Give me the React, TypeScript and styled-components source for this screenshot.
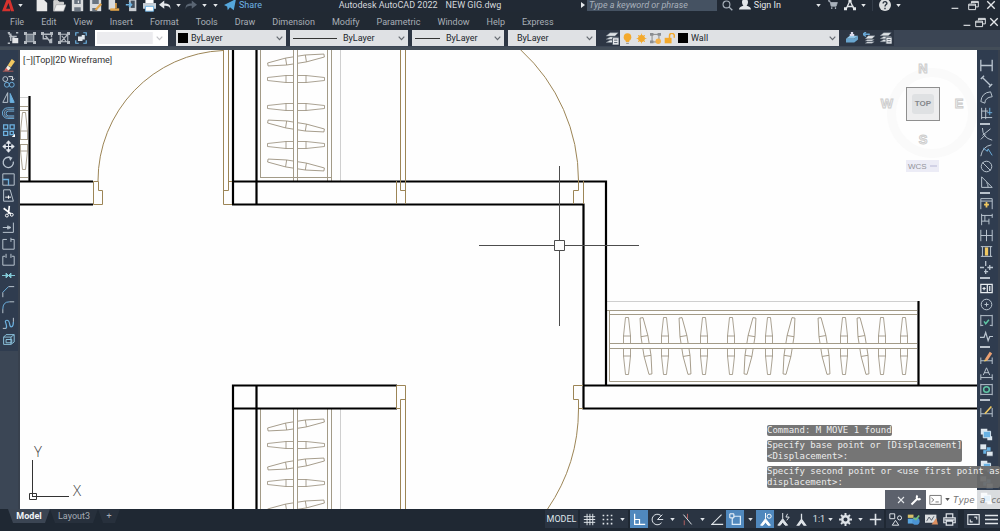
import React from "react";
import styled, { createGlobalStyle, css } from "styled-components";

const Global = createGlobalStyle`
  * { box-sizing: border-box; }
  body { margin: 0; font-family: Roboto, "Noto Sans", sans-serif; font-size: 9px; background: #1f2833; }
  button, input, select { font: inherit; color: inherit; border: 0; margin: 0; padding: 0; background: none; outline: none; }
`;

const Shell = styled.div`
  height: 100vh;
  display: flex;
  flex-direction: column;
  overflow: hidden;
  color: #d3d7dc;
`;

const TitleBar = styled.header`
  height: 12px;
  padding-bottom: 2px;
  flex: none;
  display: flex;
  align-items: center;
  background: #212934;
`;
const TitleGroup = styled.div<{ $w?: number; $end?: boolean }>`
  display: flex;
  align-items: center;
  flex: none;
  height: 10px;
  width: ${(p) => (p.$w ? p.$w + "px" : "auto")};
  justify-content: ${(p) => (p.$end ? "flex-end" : "flex-start")};
`;
const Title = styled.h1`
  flex: 1;
  margin: 0;
  display: flex;
  justify-content: center;
  gap: 8px;
  font-size: 9px;
  line-height: 10px;
  font-weight: 400;
  color: #d5d8dc;
  white-space: nowrap;
`;
const BarButton = styled.button<{ $w?: number; $tone?: string }>`
  flex: none;
  display: flex;
  align-items: center;
  justify-content: center;
  height: 16px;
  width: ${(p) => (p.$w ?? 18) + "px"};
  color: ${(p) => p.$tone ?? "#e4e7ea"};
  white-space: nowrap;
`;
const TextButton = styled(BarButton)`
  width: auto;
  height: 10px;
  gap: 3px;
  line-height: 10px;
`;
const Spacer = styled.span<{ $w: number }>`
  flex: none;
  width: ${(p) => p.$w + "px"};
`;
const Search = styled.input`
  width: 130px;
  height: 12px;
  padding: 0 2px;
  line-height: 10px;
  background: #455262;
  font-style: italic;
  &::placeholder { color: #a7b0ba; opacity: 1; }
`;
const Divider = styled.span`
  width: 1px;
  height: 12px;
  margin: 0 2px 0 4px;
  background: #333c48;
`;

const MenuRow = styled.nav`
  height: 18px;
  padding-top: 2px;
  flex: none;
  display: flex;
  align-items: center;
  justify-content: space-between;
  background: #212933;
`;
const Menu = styled.ul`
  list-style: none;
  margin: 0;
  padding: 0 0 0 10px;
  display: flex;
  gap: 17px;
`;
const MenuItem = styled.button`
  line-height: 12px;
  color: #a9afb7;
`;

const PropertyBar = styled.div`
  height: 20px;
  flex: none;
  display: flex;
  align-items: flex-start;
  background: #3b4554;
  border-bottom: 3px solid #434d58;
`;
const PropGroup = styled.div`
  display: flex;
  height: 16px;
  align-items: center;
  flex: none;
  background: #2d3644;
`;
const Grip = styled.span<{ $flat?: boolean }>`
  flex: none;
  background-image: radial-gradient(#7d8794 40%, transparent 45%);
  background-size: 2px 2px;
  ${(p) => (p.$flat
    ? css`width: 12px; height: 4px; margin: 1px 0;`
    : css`width: 4px; height: 12px;`)}
`;
const Combo = styled.label<{ $w: number; $blank?: boolean }>`
  width: ${(p) => p.$w + "px"};
  height: 16px;
  flex: none;
  margin-right: 4px;
  padding: 0 3px 0 2px;
  display: flex;
  align-items: center;
  gap: 3px;
  background: ${(p) => (p.$blank ? "linear-gradient(90deg,#ececef 80%,#fff 82%)" : "#dfe1e4")};
  border: ${(p) => (p.$blank ? "2px solid #fff" : "0")};
  color: #22262c;
`;
const Select = styled.select`
  appearance: none;
  flex: 1;
  min-width: 0;
  height: 16px;
`;
const Swatch = styled.span`
  width: 10px;
  height: 10px;
  flex: none;
  background: #000;
`;
const LineSample = styled.span<{ $w: number }>`
  width: ${(p) => p.$w + "px"};
  height: 1px;
  flex: none;
  margin: 0 3px 0 1px;
  background: #333;
`;

const Workspace = styled.main`
  position: relative;
  flex: 1;
  min-height: 0;
  display: flex;
`;
const SideBar = styled.aside<{ $w: number }>`
  width: ${(p) => p.$w + "px"};
  flex: none;
  overflow: hidden;
  background: #3b4655;
  border-right: 2px solid #38414e;
`;
const ToolStack = styled.div`
  display: flex;
  flex-direction: column;
  align-items: center;
  gap: 1px;
  padding: 0 2px 4px 0;
  background: #2f3c4f;
`;
const ToolGroup = styled.div`
  display: flex;
  flex-direction: column;
  align-items: center;
`;
const Tool = styled.button`
  width: 16px;
  height: 16px;
  display: flex;
  align-items: center;
  justify-content: center;
  color: #bac5d0;
`;
const ToolRule = styled.span`
  width: 10px;
  height: 2px;
  margin: 1px 4px 0 0;
  background: #b9c2cc;
`;

const Canvas = styled.section`
  position: relative;
  flex: 1;
  min-width: 0;
  overflow: hidden;
  background: #fefefe;
`;
const Drawing = styled.svg`
  display: block;
  width: 100%;
  height: 100%;
`;
const ViewLabel = styled.div`
  position: absolute;
  left: 3px;
  top: 4px;
  line-height: 12px;
  color: #333;
`;
const ViewCube = styled.div`
  position: absolute;
  right: 8px;
  top: 10px;
  display: grid;
  grid-template-columns: 20px 34px 20px;
  grid-template-rows: 17px 34px 17px;
  column-gap: 9px;
  row-gap: 10px;
  align-items: center;
  justify-items: center;
  &::before {
    content: "";
    position: absolute;
    left: 10px;
    top: 8px;
    width: 72px;
    height: 72px;
    border: 9px solid #fafafa;
    border-radius: 50%;
  }
`;
const Compass = styled.button<{ $col: number; $row: number }>`
  position: relative;
  grid-column: ${(p) => p.$col};
  grid-row: ${(p) => p.$row};
  font-family: "Liberation Sans", sans-serif;
  font-size: 13px;
  line-height: 16px;
  font-weight: 700;
  color: #f4f4f4;
  -webkit-text-stroke: 1px #cdcdcd;
`;
const CubeFace = styled.button`
  position: relative;
  grid-column: 2;
  grid-row: 2;
  width: 34px;
  height: 34px;
  padding: 6px;
  border: 1px solid #8f8f8f;
  background: #eeeeef;
  font-family: "Liberation Sans", sans-serif;
  font-size: 8px;
  font-weight: 700;
  color: #85878b;
`;
const CubeInset = styled.span`
  display: block;
  margin: 0 -1px;
  line-height: 20px;
  border-radius: 3px;
  background: #dfe1e3;
`;
const Wcs = styled.button`
  position: absolute;
  right: 38px;
  top: 110px;
  width: 33px;
  height: 12px;
  display: flex;
  align-items: center;
  justify-content: space-between;
  padding: 0 2px;
  background: #ececf6;
  font-family: "Liberation Sans", sans-serif;
  font-size: 8px;
  color: #939399;
`;
const WcsDash = styled.span`
  width: 7px;
  height: 2px;
  background: #d2d2e6;
`;

const History = styled.div`
  position: absolute;
  right: 0;
  bottom: 21px;
  display: flex;
  flex-direction: column;
  align-items: flex-start;
  gap: 4px;
  font-family: "DejaVu Sans Mono", "Liberation Mono", monospace;
  font-size: 9px;
  line-height: 11px;
  color: #ececec;
  white-space: pre;
`;
const HistoryLine = styled.div`
  border-radius: 2px;
  background: rgba(108, 108, 108, 0.94);
`;
const CommandBar = styled.form`
  position: absolute;
  right: 0;
  bottom: 0;
  width: 115px;
  height: 19px;
  display: flex;
`;
const CommandHandle = styled.div`
  width: 41px;
  display: flex;
  align-items: center;
  justify-content: space-between;
  padding: 0 3px;
  background: #5c616c;
`;
const CommandField = styled.label`
  flex: 1;
  min-width: 0;
  display: flex;
  align-items: center;
  gap: 3px;
  padding-left: 3px;
  background: rgba(255, 255, 255, 0.82);
  color: #555;
`;
const CommandInput = styled.input`
  flex: 1;
  min-width: 0;
  font-family: "DejaVu Sans Mono", "Liberation Mono", monospace;
  font-style: italic;
  &::placeholder { color: #777; opacity: 1; }
`;

const StatusBar = styled.footer`
  height: 22px;
  flex: none;
  display: flex;
  justify-content: space-between;
  background: #1f2833;
`;
const Tabs = styled.div`
  display: flex;
  height: 14px;
  padding-left: 8px;
`;
const Tab = styled.button<{ $active?: boolean; $w: number }>`
  width: ${(p) => p.$w + "px"};
  height: 14px;
  line-height: 14px;
  clip-path: polygon(0 0, 100% 0, calc(100% - 5px) 100%, 5px 100%);
  background: ${(p) => (p.$active ? "#3b4553" : "#27303c")};
  font-weight: ${(p) => (p.$active ? 700 : 400)};
  color: ${(p) => (p.$active ? "#f2f4f6" : "#a5acb5")};
`;
const Status = styled.div`
  display: flex;
  align-items: center;
  height: 20px;
  gap: 2px;
`;
const StatusGroup = styled.div`
  display: flex;
  background: #2a3442;
`;
const StatusButton = styled.button<{ $w?: number; $on?: boolean }>`
  width: ${(p) => (p.$w ?? 18) + "px"};
  height: 18px;
  display: flex;
  align-items: center;
  justify-content: center;
  gap: 3px;
  color: #dfe4e9;
  background: ${(p) => (p.$on ? "#5088bd" : "transparent")};
`;

type GlyphProps = { s?: number; w?: number; children: React.ReactNode };
const Glyph = ({ s = 14, w = 1.2, children }: GlyphProps) => (
  <svg width={s} height={s} viewBox="0 0 16 16" fill="none" stroke="currentColor" strokeWidth={w} aria-hidden="true">
    {children}
  </svg>
);
const Caret = () => (
  <svg width="5" height="3" viewBox="0 0 6 4" aria-hidden="true"><path d="M0 0h6L3 4z" fill="currentColor" /></svg>
);
const Chevron = ({ faint }: { faint?: boolean }) => (
  <svg width="7" height="5" viewBox="0 0 7 5" fill="none" stroke={faint ? "#c4c4c8" : "#666b72"} strokeWidth="1.2" aria-hidden="true">
    <path d="M.7 .7 3.500 3.700 6.300 .7" />
  </svg>
);

const B = "#6db1df";
const Y = "#f0c860";

const icons: Record<string, React.ReactNode> = {
  New: <path d="M2 0h8l5 5v10H2z" fill="#e9e9e9" stroke="none" />,
  Open: <><path d="M1 15V2h5l2 2h5v3" fill="#cfcfcf" stroke="#d8d8d8" /><path d="M1 15 4 7h12l-3 8z" fill="#efefef" stroke="#8a8f95" strokeWidth=".6" /></>,
  Save: <><path d="M1 1h14v14H1z" fill="#d9dbdd" stroke="none" /><path d="M4 1h8v5H4zM4 10h8v5H4z" fill="#6a7480" stroke="none" /><path d="M9 2v3" stroke="#fff" /></>,
  "Save As": <><path d="M1 1h14v14H1z" fill="#d9dbdd" stroke="none" /><path d="M4 1h8v5H4zM4 11h6v4H4z" fill="#6a7480" stroke="none" /><path d="m7 13 7-8 2 2-7 7z" fill="#e3a54a" stroke="none" /></>,
  "Open from Web": <><path d="M2 0h8v13H2z" fill="#d9dbdd" stroke="none" /><path d="M4 13h11" stroke="#e3a54a" strokeWidth="3" /><path d="M11 5v6" stroke="#e3a54a" strokeWidth="2" /></>,
  "Save to Web": <><path d="M5 0h9v15H5z" fill="#c9cdd2" stroke="none" /><path d="M7 2h5v9H7z" fill="#44505e" stroke="none" /><path d="M1 7h7M5 4l3 3-3 3" stroke={B} strokeWidth="2" /></>,
  Plot: <><path d="M3 0h10v5H3z" fill="#fff" stroke="none" /><path d="M0 5h16v7H0z" fill="#c9d1d8" stroke="none" /><path d="M3 9h10v6H3z" fill="#fff" stroke={B} /></>,
  Undo: <path d="M15 14c0-4-3-5-8-5v4L0 7.500 7 2v4c6 0 9 2 8 8z" fill="currentColor" stroke="none" />,
  Redo: <path d="M1 14c0-4 3-5 8-5v4l7-5.500L9 2v4c-6 0-9 2-8 8z" fill="currentColor" stroke="none" />,
  Send: <path d="M0 8 16 0l-3 15-5-4-3 4-1-6 8-6-6 8z" fill="#55a6dc" stroke="none" />,
  Search: <><circle cx="6.500" cy="6.500" r="5" strokeWidth="1.600" /><path d="m10 10 5 5" strokeWidth="2" /></>,
  User: <path d="M8 0c6 0 4 8 2 9 3 .5 6 2 6 5H0c0-3 3-4.500 6-5C4 8 2 0 8 0z" fill="currentColor" stroke="none" />,
  Cart: <><path d="M0 1h3l2 9h8l2-6H4z" fill="currentColor" /><path d="M5 13h2M11 13h2" strokeWidth="2.500" /></>,
  Apps: <><path d="M8 2 3 13M8 2l5 11M4 10h9" strokeWidth="1.800" /><path d="M6 0h4v4H6zM0 11h4v4H0zM12 11h4v4h-4z" fill="currentColor" stroke="none" /></>,
  Help: <><circle cx="8" cy="8" r="8" fill="#dcdee0" stroke="none" /><path d="M5.500 6c0-3.500 5.500-3 5 0-.3 1.500-2.500 1.500-2.500 4M8 11.500v2" stroke="#27303c" strokeWidth="1.800" /></>,
  Minimize: <path d="M1 13h12" strokeWidth="2" />,
  Restore: <path d="M1 6h10v8H1zM1 7.500h10M5 5V2h10v8h-4M5 3.500h10" strokeWidth="1.400" />,
  Close: <path d="m2 2 12 12M14 2 2 14" strokeWidth="2.200" />,

  Erase: <><path d="M7 8 12 0l4 3-5 7z" fill={Y} stroke="none" /><path d="m7 8 4 3-3 3H3z" fill="#f4ede0" stroke="none" /><path d="m3 14 2-3 3 3z" fill="#dd5555" stroke="none" /><path d="M1 15h13" stroke="#b05a55" /></>,
  Copy: <><circle cx="4" cy="5" r="3" /><path d="M8 2h5v4M11 4.500l2 2 2-2" stroke="#e4e7ea" /><circle cx="6" cy="12" r="3" stroke={B} /><circle cx="12" cy="12" r="3" stroke={B} /></>,
  Mirror: <><path d="M7 2v12H1z" /><path d="M10 3v11h5z" fill={B} stroke={B} /></>,
  Offset: <><path d="M15 1H7a6 6 0 0 0 0 13h8" stroke={B} /><path d="M15 5H8a2.500 2.500 0 0 0 0 6h7" stroke={B} /><path d="M15 3H7.500a4 4 0 0 0 0 9.500H15" stroke="#7b95ac" /></>,
  Array: <><path d="M2 1h5v5H2zM10 1h5v5h-5zM2 9h5v5H2zM10 9h4v4h-4z" stroke={B} strokeWidth="1.600" /><path d="M16 12v4h-4z" fill="#fff" stroke="none" /></>,
  Move: <path d="M8 1v14M1 8h14M5.500 4 8 1l2.500 3zM5.500 12 8 15l2.500-3zM4 5.500 1 8l3 2.500zM12 5.500 15 8l-3 2.500z" fill="currentColor" stroke="#e8edf2" />,
  Rotate: <><path d="M14 7a6.300 6.300 0 1 1-4-5" strokeWidth="1.600" /><path d="M8 0l5 2-3 4z" fill="currentColor" stroke="none" /></>,
  Scale: <><path d="M1 15V1h14v14z" /><path d="M1 8h7v7" stroke={B} strokeWidth="1.600" /></>,
  Stretch: <><path d="M2 1h8l4 14H2z" /><path d="M4 10h7M8 8v4" stroke="#fff" /></>,
  Trim: <><path d="M2 4l9 7M9 1 8 11" stroke="#fff" strokeWidth="2" /><circle cx="6" cy="13" r="1.800" stroke="#fff" /><circle cx="12" cy="12" r="1.800" stroke="#fff" /></>,
  Extend: <path d="M1 8h9M14 2v12M1 14h13M7 6l4 2-4 2z" />,
  "Break at Point": <path d="M6 3H1v12h14V3h-4M11 1v5" />,
  Break: <path d="M4 4H1v11h14V4h-3M5 1v5M11 1v5" />,
  Join: <path d="M0 8h16M5 5l3 3-3 3zM11 5 8 8l3 3z" stroke="#84cbd8" fill="#84cbd8" />,
  Chamfer: <><path d="M1 15V9M8 2h7" /><path d="M1 9l7-7" stroke={B} /></>,
  Fillet: <><path d="M1 15v-5M9 1h6" /><path d="M1 10q0-9 8-9" stroke={B} /></>,
  Blend: <><path d="M1 14h4M14 1v5" /><path d="M5 14C8 11 1 4 6 4s2 9 6 8q2-1 2-6" stroke={B} strokeWidth="1.500" /></>,
  Explode: <path d="M2 5h9v9H2zM2 5l3-3h10v9l-4 3M5 8h7v4H5zM11 5l4-3" stroke="#8cc3dd" />,

  Linear: <path d="M1 1v14M15 1v14M1 8h14" strokeWidth="1.600" />,
  Aligned: <path d="M1 5 5 1M11 15l4-4M3 3l10 10" strokeWidth="1.600" />,
  "Arc Length": <path d="M1 13Q2 2 13 1M6 15q0-7 9-8M1 13l5 2M13 1l2 6" />,
  Ordinate: <><path d="M2 1v14M2 5h8M2 13h13M7 1v14" /><path d="M12 1v9M9 7h6" stroke={B} /></>,
  Radius: <path d="M15 15Q3 12 3 0M3 9l10-8M1 14l6-6" />,
  Jogged: <><path d="M1 15Q3 3 14 1" /><path d="m4 5 5 4 1-3 5 8" stroke={B} /></>,
  Diameter: <><circle cx="8" cy="8" r="6.500" /><path d="m3 3 10 10" /></>,
  Angular: <path d="M2 1v13h13L2 1M10 14q0-4-2-6" />,
  "Quick Dimension": <><path d="M1 15V2h14v13M1 5h14" /><path d="M8 6v7M5 9.500h6" stroke={Y} strokeWidth="2.200" /></>,
  Baseline: <path d="M2 1v14M2 3h13M2 10h9M11 7v7M15 1v5M6 3v7" />,
  Continue: <path d="M1 1v14M8 1v14M15 1v14M1 8h14" />,
  "Dimension Space": <><path d="M1 2h14M1 14h14M3 2v12M13 2v12" /><path d="M8 3v10" stroke={Y} strokeWidth="4" /></>,
  "Dimension Break": <path d="M7 0v6M7 10v6M0 8h5M9 8h7M12 5v6M5 13h5" strokeWidth="1.600" />,
  Tolerance: <path d="M1 3h14v10H1zM9 3v10M3 8h4M5 6v4M12 5v6" stroke="#e8ecef" strokeWidth="1.500" />,
  "Center Mark": <><circle cx="8" cy="8" r="6.500" /><path d="M8 5.500v5M5.500 8h5" /></>,
  Inspection: <><path d="M1 1v14M15 1v14M1 2h14M1 14h3M12 14h3" /><path d="m5 9 2 3 4-5" stroke="#5fc7a5" strokeWidth="1.800" /></>,
  "Jogged Linear": <path d="M0 9h5l2-6 3 10 2-5h4" strokeWidth="1.500" />,
  "Dimension Edit": <><path d="M1 8v8M15 8v8M1 12h14" /><path d="m6 10 6-9 3 2-6 9z" fill="#e9a072" stroke="none" /><path d="m5 13 1-3 3 2z" fill={Y} stroke="none" /></>,
  "Text Edit": <path d="M1 9v7M15 9v7M1 13h14M4 10l4-9 4 9M5 7h6" />,
  Update: <><path d="M1 1v14M15 1v14M1 2h14M1 14h14" /><circle cx="8" cy="8" r="3.500" stroke="#5fc7a5" strokeWidth="1.800" /></>,
  "Dimension Style": <><path d="M1 5v11M15 5v11M1 12h14" /><path d="m6 12 8-9" stroke={Y} strokeWidth="2" /></>,
  "Bring to Front": <><path d="M1 1h8v7H1zM9 10h6v5H9z" fill="#dfe8ef" stroke="none" /><path d="M4 4h9v8H4z" fill="#69b2e4" stroke="#d9e8f3" /></>,
  "Send to Back": <><path d="M4 4h9v8H4z" fill="#69b2e4" stroke="none" /><path d="M0 0h8v7H0zM8 9h8v6H8z" fill="#dfe8ef" stroke="#2f3c4f" strokeWidth=".8" /></>,

  Group: <><path d="M1 1h3M12 1h3M1 15h3M2 2l12 10M3 6h10M5 2v10" strokeWidth="2" /><path d="M7 8h8v7H7z" fill="#e3e5e8" stroke="none" /></>,
  Ungroup: <><path d="M3 3h10v10H3z" fill="#77818d" strokeWidth="1.600" /><path d="M0 0h4v4H0zM12 0h4v4h-4zM0 12h4v4H0zM12 12h4v4h-4z" fill="currentColor" stroke="none" /></>,
  "Group Edit": <><path d="M2 3h12v4M3 2v7h6M6 5l7 9" strokeWidth="1.800" /><path d="M0 0h4v4H0zM12 0h4v4h-4zM11 10l4-2v7h-4z" fill="currentColor" stroke="none" /></>,
  "Group Selection": <><path d="M3 3h10v10H3zM14 2 3 14M5 5l6 8" strokeWidth="1.500" /><path d="M0 0h4v4H0zM12 0h4v4h-4zM0 12h4v4H0zM12 12h4v4h-4z" fill="currentColor" stroke="none" /></>,
  "Bounding Box": <><path d="M1 5V1h4M11 1h4v4M15 11v4h-4M5 15H1v-4" stroke={B} strokeWidth="1.600" /><path d="M4 6h5V4h4v6h-3v2H4z" fill="#dfe6ec" stroke="none" /></>,
  Layers: <><path d="m0 5 5-4h10l-4 4zM0 9l5-3h10l-4 3zM0 13l5-3h10l-4 3z" fill="#dfe3e6" stroke="#6f7a86" strokeWidth=".6" /><path d="M8 7h8v9H8z" fill="#e9ebee" stroke="#55606c" /><path d="M10 10h4M10 13h4" stroke="#55606c" /></>,
  Bulb: <><circle cx="8" cy="6" r="5.500" fill="#f3a92c" stroke="none" /><path d="M5.500 10h5v3h-5z" fill="#f3a92c" stroke="none" /><path d="M6 15h4" stroke="#777" /></>,
  Sun: <><circle cx="8" cy="8" r="5" fill="#f3a92c" stroke="none" /><path d="M8 1v14M1 8h14M3 3l10 10M13 3 3 13" stroke="#f3a92c" /></>,
  Viewport: <><path d="M3 2h10v11H3z" stroke="#777" /><path d="M0 0h5v4H0zM11 0h5v4h-5zM0 11h5v4H0z" fill="#8a8d91" stroke="none" /><circle cx="12" cy="12" r="4" fill="#f3b24a" stroke="none" /></>,
  Unlock: <><path d="M1 7h10v8H1z" fill="#f3a92c" stroke="none" /><path d="M8 8V4a3.500 3.500 0 0 1 7 0v3" stroke="#f3a92c" strokeWidth="2.200" /></>,
  "Make Current": <><path d="m0 9 5-4h11l-5 4z" fill="#8fc7ea" stroke="none" /><path d="M0 9h11l5-4v5l-5 4H0z" fill="#69a5cf" stroke="none" /><path d="M8 0v5M5 4h6" stroke="#dde" strokeWidth="3" /></>,
  Previous: <><path d="M0 3h9M4 0 0 3l4 3" stroke="#69a9d8" strokeWidth="2" /><path d="m3 9 4-4h9l-4 4zM3 12l3-2h9l-3 2zM3 15l3-2h9l-3 2z" fill="#e3e6e9" stroke="#6f7a86" strokeWidth=".6" /></>,

  Grid: <path d="M5 1v14M8.500 1v14M12 1v14M1 4.500h14M1 8h14M1 11.500h14" />,
  Snap: <path d="M2 3h13M2 8h13M2 13h13" strokeDasharray="2 3" strokeWidth="2" />,
  Ortho: <path d="M2 1v13h13M2 8h6v6" stroke="#fff" strokeWidth="1.500" />,
  Polar: <><path d="M13 12A6.500 6.500 0 1 1 12 3" /><path d="M8 8h7M8 8l6-6" /></>,
  Isodraft: <><path d="m3 2 10 12" /><path d="M8 1v6M4 9v6" stroke="#b25f5f" /></>,
  Tracking: <path d="M15 14H1L13 2" strokeWidth="1.400" />,
  "Object Snap": <><path d="M4 4h10v10H4z" stroke="#dcecfa" strokeWidth="1.500" /><path d="M1 1h5v5H1z" fill="#5088bd" stroke="#fff" /></>,
  Annotation: <><path d="M8 0v7L2 15h3l3-4 3 4h3L8 7" fill="#fff" stroke="#fff" /><circle cx="12.500" cy="4" r="2.500" stroke="#fff" /></>,
  "Auto Scale": <><path d="M7 0v7L1 15h3l3-4 3 4h3L7 7" fill="currentColor" /><path d="m13 1-2 4h4l-3 4" /></>,
  "Annotation Scale": <path d="M8 1v7L3 15h2l3-4 3 4h2L8 8" fill="currentColor" strokeWidth="1.600" />,
  Gear: <><circle cx="8" cy="8" r="4" strokeWidth="3" /><path d="M8 0v3M8 13v3M0 8h3M13 8h3M2.500 2.500l2 2M11.500 11.500l2 2M13.500 2.500l-2 2M4.500 11.500l-2 2" strokeWidth="2.400" /></>,
  Plus: <path d="M8 1v14M1 8h14" strokeWidth="2" />,
  Isolate: <><path d="M1 1h6v6H1zM4 15l4-6 4 6z" /><circle cx="13" cy="6" r="2.500" /></>,
  Hardware: <><path d="M1 2h7v4H1z" fill="#d6c06a" stroke="none" /><path d="M1 7h7v6H1z" fill="#5aa6e0" stroke="none" /><circle cx="11" cy="10" r="4.500" fill="#4b94d4" stroke="none" /><path d="m8 6 3 2 4-5" stroke="#73c27a" strokeWidth="2" /></>,
  Graphics: <><path d="M0 2h14v10H0z" fill="#d8dcdf" stroke="none" /><path d="m2 10 3-5 3 4 3-5" stroke="#56606c" /><path d="m8 14 6-8 2 8z" fill="#dc9061" stroke="none" /></>,
  Printer: <path d="M4 6V1h8v5M4 12H1V6h14v6h-3M4 10h8v5H4zM2 8.500h12" strokeWidth="1.500" />,
  "Clean Screen": <path d="M1 2h14v12H1zM9 5h3v3M7 11H4V8" strokeWidth="1.400" />,
  Customize: <path d="M0 3h16M0 8h16M0 13h16" strokeWidth="1.800" />,
  Wrench: <path d="m2 14 7-7M10 2c-3 3 1 7 4 4" stroke="#fff" strokeWidth="2.600" fill="none" />,
  Prompt: <path d="M1 3h14v11H1zM3 6l3 2.500L3 11M8 11h4" stroke="#777" />,
};

const Bar = ({ name, w, tone, s = 14 }: { name: string; w?: number; tone?: string; s?: number }) => (
  <BarButton type="button" aria-label={name} $w={w} $tone={tone}><Glyph s={s}>{icons[name]}</Glyph></BarButton>
);
const Drop = ({ w = 12, name }: { w?: number; name: string }) => (
  <BarButton type="button" aria-label={name} $w={w}><Caret /></BarButton>
);
const Stat = ({ name, on }: { name: string; on?: boolean }) => (
  <StatusButton type="button" aria-label={name} $on={on}><Glyph s={13}>{icons[name]}</Glyph></StatusButton>
);
const StatDrop = ({ name }: { name: string }) => (
  <StatusButton type="button" aria-label={name} $w={12}><Caret /></StatusButton>
);
const SideTool = ({ name }: { name: string }) => (
  <Tool type="button" aria-label={name}><Glyph s={13}>{icons[name]}</Glyph></Tool>
);

const modifyTools = [
  ["Erase", "Copy", "Mirror", "Offset"],
  ["Array", "Move", "Rotate"],
  ["Scale", "Stretch", "Trim", "Extend", "Break at Point", "Break", "Join", "Chamfer", "Fillet", "Blend", "Explode"],
];
const dimensionTools = [
  ["Linear", "Aligned", "Arc Length", "Ordinate"],
  ["Radius", "Jogged", "Diameter", "Angular"],
  ["Quick Dimension", "Baseline", "Continue", "Dimension Space", "Dimension Break"],
  ["Tolerance", "Center Mark", "Inspection", "Jogged Linear"],
  ["Dimension Edit", "Text Edit", "Update"],
  ["Dimension Style"],
];
const menus = ["File", "Edit", "View", "Insert", "Format", "Tools", "Draw", "Dimension", "Modify", "Parametric", "Window", "Help", "Express"];

/* A coat hanger seen from above, centred on x, y and turned by a degrees. */
const Hanger = ({ x, y, a }: { x: number; y: number; a: number }) => (
  <g transform={`translate(${x} ${y}) rotate(${a})`}>
    <path d="M-28.500-1.500-10-3.500H10L28.500-1.500V1.500L10 3.500H-10L-28.500 1.500zM-10-3.500V3.500M10-3.500V3.500" />
  </g>
);

const rightHangers: [number, number][] = [
  [627, 0], [646, -9], [665, 0], [685, -9], [704, 0], [731, 0], [750, 9], [769, 0], [789, 9],
  [824, -9], [844, 0], [863, -9], [882, 0], [904, 0],
];
const upperHangers: [number, number][] = [[60, -9], [79, 0], [107, 0], [126, 9], [145, 0], [165, 9]];
const lowerHangers: [number, number][] = [[425, -9], [445, 0], [464, -9], [483, 0], [506, -9]];

const Plan = () => (
  <Drawing role="img" aria-label="Floor plan">
    <g transform="translate(-20 -50)" fill="none">
      <g stroke="#cfcfcf">
        <path d="M340.500 50V181M340.500 409V900M607 301.500H917M20 97.500H28" />
      </g>
      <g stroke="#968c78" strokeWidth="0.800">
        {upperHangers.map(([y, a]) => <Hanger key={y} x={296} y={y} a={a} />)}
        {lowerHangers.map(([y, a]) => <Hanger key={y} x={296} y={y} a={a} />)}
        {rightHangers.map(([x, a]) => <Hanger key={x} x={x} y={346} a={90 + a} />)}
        <Hanger x={24} y={141} a={90} />
      </g>
      <g fill="#fefefe" stroke="none">
        <path d="M293 50h5v128h-5zM293 410h5v500h-5zM610 343h307v5H610zM20 140h8v4h-8z" />
      </g>
      <g stroke="#a39b88">
        <path d="M260.500 50V178M293.500 50V181M297.500 50V181M327.500 50V181M331.500 50V181M260 177.500H331" />
        <path d="M260.500 409V900M293.500 409V900M297.500 409V900M327.500 409V900M331.500 409V900" />
        <path d="M607 310.500H917M609 314.500H917M609.500 311V381.500H917M610 343.500H917M610 348.500H917" />
        <path d="M20 106.500H28M20 110.500H28M20 139.500H28M20 144.500H28M20 177.500H28" />
      </g>
      <g stroke="#000" strokeWidth="2.200">
        <path d="M20 181.500H93M20 204.500H93M29.500 96V181" />
        <path d="M233 50V205M256.500 50V204M232 181.500H606V385M232 204.500H583.500V408.500H1900M583 385.500H1900" />
        <path d="M397 385.500H233V900M256.500 385V900M232 408.500H397M918.500 301V385" />
      </g>
      <g stroke="#9c8556">
        <path d="M93.500 181.500H98.500V190.500H102.500V204.500H93.500z" />
        <path d="M98 181A130.500 130.500 0 0 1 223 50.500" />
        <path d="M223.500 50V204.500H232M228.500 50V190.500H223M228 181.500H232" />
        <path d="M400.500 50V190.500H405M405.500 50V204M396.500 204V181" />
        <path d="M520.800 50A177.500 177.500 0 0 1 578.500 181V190.500H573.500V204M583.500 181V204" />
        <path d="M396.500 409V385.500H405.500V900M405 399.500H400.500V900M396 408.500H400" />
        <path d="M583 385.500H573.500V399.500H578.500V409A177.500 177.500 0 0 1 547.600 509M578 408.500H583" />
      </g>
      <g stroke="#4d4d4d">
        <path d="M479 245.500H554M564 245.500H639M559.500 166V241M559.500 251V326M554.500 240.500H564.500V250.500H554.500z" />
      </g>
      <g stroke="#333">
        <path d="M32.500 460V497M32 496.500H69M29.500 493.500H36.500V499.500H29.500z" />
      </g>
      <g fill="#444" fontFamily="Open Sans, sans-serif" fontWeight="300" fontSize="15">
        <text x="34" y="457">Y</text>
        <text x="73" y="496">X</text>
      </g>
    </g>
  </Drawing>
);

export default function App() {
  return (
    <Shell>
      <Global />
      <TitleBar>
        <TitleGroup $w={262}>
          <BarButton type="button" aria-label="Application menu" $w={16}>
            <Glyph s={13}><path d="M0 15 6 0h4l5 15h-4L8 5l-3 7h5v3z" fill="#d5322e" stroke="none" /></Glyph>
          </BarButton>
          <Drop name="Application options" w={8} />
          <Spacer $w={8} />
          {["New", "Open", "Save", "Save As", "Open from Web", "Save to Web", "Plot"].map((n) => <Bar key={n} name={n} s={13} />)}
          <Bar name="Undo" w={14} s={12} />
          <Drop name="Undo list" />
          <Bar name="Redo" w={14} s={12} tone="#5a6573" />
          <Drop name="Redo list" />
          <Drop name="Customize toolbar" w={10} />
          <Spacer $w={4} />
          <TextButton type="button" $tone="#6eb4e6"><Glyph s={12}>{icons.Send}</Glyph>Share</TextButton>
        </TitleGroup>
        <Title><span>Autodesk AutoCAD 2022</span><span>NEW GIG.dwg</span></Title>
        <TitleGroup $w={422} $end>
          <BarButton type="button" aria-label="Expand search" $w={9}>
            <svg width="4" height="6" viewBox="0 0 4 6" aria-hidden="true"><path d="M0 0v6l4-3z" fill="currentColor" /></svg>
          </BarButton>
          <Search aria-label="Search" placeholder="Type a keyword or phrase" />
          <Bar name="Search" w={22} s={11} tone="#a9b2bc" />
          <TextButton type="button"><Glyph s={12}>{icons.User}</Glyph>Sign In</TextButton>
          <Spacer $w={31} />
          <Drop name="Account" />
          <Bar name="Cart" w={18} s={10} tone="#a9b2bc" />
          <Bar name="Apps" w={16} s={12} />
          <Drop name="App list" w={10} />
          <Divider />
          <Bar name="Help" w={20} s={12} />
          <Drop name="Help options" w={6} />
          <Spacer $w={45} />
          <Bar name="Minimize" w={18} s={9} />
          <Bar name="Restore" w={18} s={11} />
          <Bar name="Close" w={18} s={10} />
        </TitleGroup>
      </TitleBar>
      <MenuRow>
        <Menu>{menus.map((m) => <li key={m}><MenuItem type="button">{m}</MenuItem></li>)}</Menu>
        <TitleGroup>
          <Bar name="Minimize" w={13} s={9} />
          <Bar name="Restore" w={13} s={11} />
          <Bar name="Close" w={13} s={10} />
        </TitleGroup>
      </MenuRow>
      <PropertyBar>
        <PropGroup>
          <Grip />
          {["Group", "Ungroup", "Group Edit", "Group Selection", "Bounding Box"].map((n) => <Bar key={n} name={n} w={17} s={12} tone="#b4bac1" />)}
          <Spacer $w={6} />
          <Combo $w={73} $blank><Select aria-label="Named group" disabled /><Chevron faint /></Combo>
        </PropGroup>
        <PropGroup>
          <Grip />
          <Combo $w={110}><Swatch /><Select aria-label="Colour"><option>ByLayer</option></Select><Chevron /></Combo>
          <Combo $w={118}><LineSample $w={44} /><Select aria-label="Linetype"><option>ByLayer</option></Select><Chevron /></Combo>
          <Combo $w={92}><LineSample $w={25} /><Select aria-label="Lineweight"><option>ByLayer</option></Select><Chevron /></Combo>
          <Combo $w={88}><LineSample $w={0} /><Select aria-label="Plot style"><option>ByLayer</option></Select><Chevron /></Combo>
        </PropGroup>
        <PropGroup>
          <Grip />
          <Bar name="Layers" w={16} s={13} />
          <Combo $w={219}>
            {["Bulb", "Sun", "Viewport", "Unlock"].map((n) => <Glyph key={n} s={11}>{icons[n]}</Glyph>)}
            <Swatch /><Select aria-label="Layer"><option>Wall</option></Select><Chevron />
          </Combo>
          {["Make Current", "Previous", "Layers"].map((n) => <Bar key={n} name={n} w={17} s={12} />)}
        </PropGroup>
      </PropertyBar>
      <Workspace>
        <SideBar $w={20}>
          <ToolStack>
            <Grip $flat />
            {modifyTools.map((g) => <ToolGroup key={g[0]}>{g.map((n) => <SideTool key={n} name={n} />)}</ToolGroup>)}
          </ToolStack>
        </SideBar>
        <Canvas>
          <Plan />
          <ViewLabel>[−][Top][2D Wireframe]</ViewLabel>
          <ViewCube>
            <Compass type="button" $col={2} $row={1}>N</Compass>
            <Compass type="button" $col={1} $row={2}>W</Compass>
            <CubeFace type="button"><CubeInset>TOP</CubeInset></CubeFace>
            <Compass type="button" $col={3} $row={2}>E</Compass>
            <Compass type="button" $col={2} $row={3}>S</Compass>
          </ViewCube>
          <Wcs type="button">WCS<WcsDash /></Wcs>
        </Canvas>
        <SideBar $w={23}>
          <ToolStack>
            <Grip $flat />
            {dimensionTools.map((g, i) => (
              <React.Fragment key={g[0]}>
                {i > 0 && <ToolRule />}
                <ToolGroup>{g.map((n) => <SideTool key={n} name={n} />)}</ToolGroup>
              </React.Fragment>
            ))}
            <Grip $flat />
            <ToolGroup>
              <SideTool name="Bring to Front" />
              <SideTool name="Send to Back" />
              <SideTool name="Bring to Front" />
              <SideTool name="Send to Back" />
              <SideTool name="Bring to Front" />
            </ToolGroup>
          </ToolStack>
        </SideBar>
        <History>
          <HistoryLine>Command: M MOVE 1 found</HistoryLine>
          <HistoryLine>{"Specify base point or [Displacement]\n<Displacement>:"}</HistoryLine>
          <HistoryLine>{"Specify second point or <use first point as\ndisplacement>:"}</HistoryLine>
        </History>
        <CommandBar>
          <CommandHandle>
            <Grip />
            <BarButton type="button" aria-label="Close command line" $w={12}><Glyph s={8}>{icons.Close}</Glyph></BarButton>
            <BarButton type="button" aria-label="Customize command line" $w={14}><Glyph s={12}>{icons.Wrench}</Glyph></BarButton>
          </CommandHandle>
          <CommandField>
            <Glyph s={13}>{icons.Prompt}</Glyph>
            <Caret />
            <CommandInput aria-label="Command" placeholder="Type a command" />
          </CommandField>
        </CommandBar>
      </Workspace>
      <StatusBar>
        <Tabs>
          <Tab type="button" $w={42} $active>Model</Tab>
          <Tab type="button" $w={48}>Layout3</Tab>
          <Tab type="button" $w={22}>+</Tab>
        </Tabs>
        <Status>
          <StatusGroup><StatusButton type="button" $w={33}>MODEL</StatusButton></StatusGroup>
          <StatusGroup>
            <Stat name="Grid" /><Stat name="Snap" /><StatDrop name="Snap options" />
          </StatusGroup>
          <StatusGroup>
            <Stat name="Ortho" on /><Stat name="Polar" /><StatDrop name="Polar options" />
            <Stat name="Isodraft" /><StatDrop name="Isodraft options" />
            <Stat name="Tracking" /><Stat name="Object Snap" on /><StatDrop name="Snap modes" />
            <Stat name="Annotation" on /><Stat name="Auto Scale" /><Stat name="Annotation Scale" />
            <StatusButton type="button" $w={26}>1:1<Caret /></StatusButton>
            <Stat name="Gear" /><StatDrop name="Workspaces" /><Stat name="Plus" />
          </StatusGroup>
          <StatusGroup>
            <Stat name="Isolate" /><Stat name="Hardware" /><Stat name="Graphics" /><Stat name="Printer" />
          </StatusGroup>
          <Spacer $w={2} />
          <StatusGroup><Stat name="Clean Screen" /><Stat name="Customize" /></StatusGroup>
        </Status>
      </StatusBar>
    </Shell>
  );
}
